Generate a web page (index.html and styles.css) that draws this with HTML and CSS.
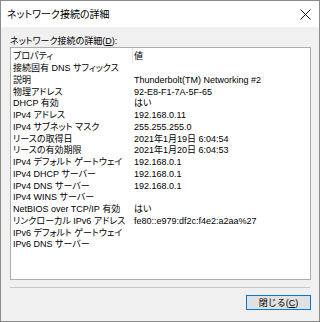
FILE: index.html
```html
<!DOCTYPE html>
<html lang="ja">
<head>
  <meta charset="UTF-8">
  <title>ネットワーク接続の詳細</title>
  <link rel="stylesheet" href="styles.css">
</head>
<body>
  <div class="window">
    <div class="titlebar">
      <span class="title">ネットワーク接続の詳細</span>
      <svg class="close" width="11" height="11" viewBox="0 0 11 11">
        <path d="M0.5 0.5 L10.5 10.5 M10.5 0.5 L0.5 10.5" stroke="#111" stroke-width="1" fill="none"/>
      </svg>
    </div>

    <div class="content">
      <div class="label">ネットワーク接続の詳細(<u>D</u>):</div>
      <div class="listbox">
        <div class="row header">
          <div class="cell name">プロパティ</div>
          <div class="cell value">値</div>
        </div>
        <div class="row"><div class="cell name">接続固有 DNS サフィックス</div><div class="cell value"></div></div>
        <div class="row"><div class="cell name">説明</div><div class="cell value">Thunderbolt(TM) Networking #2</div></div>
        <div class="row"><div class="cell name">物理アドレス</div><div class="cell value">92-E8-F1-7A-5F-65</div></div>
        <div class="row"><div class="cell name">DHCP 有効</div><div class="cell value">はい</div></div>
        <div class="row"><div class="cell name">IPv4 アドレス</div><div class="cell value">192.168.0.11</div></div>
        <div class="row"><div class="cell name">IPv4 サブネット マスク</div><div class="cell value">255.255.255.0</div></div>
        <div class="row"><div class="cell name">リースの取得日</div><div class="cell value">2021年1月19日 6:04:54</div></div>
        <div class="row"><div class="cell name">リースの有効期限</div><div class="cell value">2021年1月20日 6:04:53</div></div>
        <div class="row"><div class="cell name">IPv4 デフォルト ゲートウェイ</div><div class="cell value">192.168.0.1</div></div>
        <div class="row"><div class="cell name">IPv4 DHCP サーバー</div><div class="cell value">192.168.0.1</div></div>
        <div class="row"><div class="cell name">IPv4 DNS サーバー</div><div class="cell value">192.168.0.1</div></div>
        <div class="row"><div class="cell name">IPv4 WINS サーバー</div><div class="cell value"></div></div>
        <div class="row"><div class="cell name">NetBIOS over TCP/IP 有効</div><div class="cell value">はい</div></div>
        <div class="row"><div class="cell name">リンクローカル IPv6 アドレス</div><div class="cell value">fe80::e979:df2c:f4e2:a2aa%27</div></div>
        <div class="row"><div class="cell name">IPv6 デフォルト ゲートウェイ</div><div class="cell value"></div></div>
        <div class="row"><div class="cell name">IPv6 DNS サーバー</div><div class="cell value"></div></div>
      </div>
      <div class="separator"></div>
      <div class="buttons">
        <button class="btn">閉じる(<u>C</u>)</button>
      </div>
    </div>
  </div>
</body>
</html>
```

FILE: styles.css
```css
body {
  margin: 0;
  padding: 0;
  background: #fff;
  font-family: "Liberation Sans", "Noto Sans CJK JP", sans-serif;
  font-size: 9px;
  color: #000;
  font-feature-settings: "palt";
}

.window {
  width: 320px;
  height: 322px;
  box-sizing: border-box;
  border: 1px solid #8c8c8c;
  background: #f0f0f0;
  display: flex;
  flex-direction: column;
}

.titlebar {
  height: 26px;
  background: #fff;
  display: flex;
  align-items: center;
  justify-content: space-between;
  padding: 0 8px 0 6px;
}

.title {
  font-family: "Noto Sans CJK JP", sans-serif;
  font-size: 10px;
  line-height: 12px;
}

.close {
  display: block;
  margin-top: 1px;
}

.content {
  flex: 1;
  display: flex;
  flex-direction: column;
  padding: 8px 8px 0 9px;
}

.label {
  height: 12px;
  line-height: 12px;
}

.label u,
.btn u {
  text-underline-offset: 1px;
}

.listbox {
  height: 233px;
  box-sizing: border-box;
  border: 1px solid #adadad;
  background: #fff;
}

.row {
  display: grid;
  grid-template-columns: 122px 1fr;
  height: 11.75px;
  line-height: 11.75px;
  white-space: nowrap;
}

.row.header {
  height: 15px;
  line-height: 16px;
}

.cell {
  overflow: hidden;
}

.cell.name {
  padding-left: 2px;
  box-sizing: border-box;
}

.cell.value {
  padding-left: 1px;
}

.header .cell.name {
  border-right: 1px solid #e5e5e5;
}

.separator {
  margin: 7px 1px 7px 0;
  border-top: 1px solid #c8c8c8;
}

.buttons {
  display: flex;
  justify-content: flex-end;
}

.btn {
  width: 65px;
  height: 15px;
  box-sizing: border-box;
  padding: 0;
  border: 1px solid #0078d7;
  background: #e1e1e1;
  font-family: "Liberation Sans", "Noto Sans CJK JP", sans-serif;
  font-size: 9px;
  line-height: 12px;
  color: #000;
  box-shadow: inset 0 0 0 1px #e1e1e1;
}
```
